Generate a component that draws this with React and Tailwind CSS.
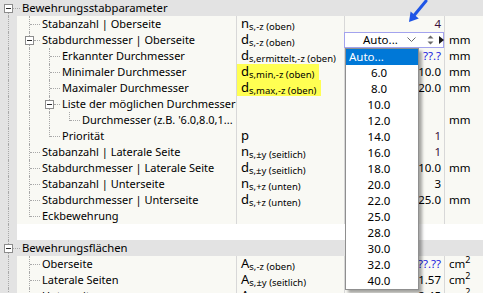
import React from "react";

const FONT = { fontFamily: '"Noto Sans", "Open Sans", sans-serif' };

const rows = [
  { type: "header", label: "Bewehrungsstabparameter", first: true },
  { g: ["T"], label: "Stabanzahl | Oberseite", sym: ["n", "s,-z (oben)"], val: "4", valCls: "text-[#3a103a]" },
  { g: ["B"], label: "Stabdurchmesser | Oberseite", sym: ["d", "s,-z (oben)"], combo: true, unit: "mm" },
  { g: ["I", "T"], label: "Erkannter Durchmesser", sym: ["d", "s,ermittelt,-z (oben)"], val: "??.?", valCls: "text-[#2020e0]", unit: "mm" },
  { g: ["I", "T"], label: "Minimaler Durchmesser", sym: ["d", "s,min,-z (oben)"], yellow: true, val: "10.0", unit: "mm" },
  { g: ["I", "T"], label: "Maximaler Durchmesser", sym: ["d", "s,max,-z (oben)"], yellow: true, val: "20.0", unit: "mm" },
  { g: ["I", "B"], label: "Liste der möglichen Durchmesser" },
  { g: ["I", "I", "L"], label: "Durchmesser (z.B. '6.0,8.0,1...", unit: "mm" },
  { g: ["I", "L"], label: "Priorität", sym: ["p", ""], val: "1", valCls: "text-[#3a103a]" },
  { g: ["T"], label: "Stabanzahl | Laterale Seite", sym: ["n", "s,±y (seitlich)"], val: "1", valCls: "text-[#3a103a]" },
  { g: ["T"], label: "Stabdurchmesser | Laterale Seite", sym: ["d", "s,±y (seitlich)"], val: "10.0", unit: "mm" },
  { g: ["T"], label: "Stabanzahl | Unterseite", sym: ["n", "s,+z (unten)"], val: "3" },
  { g: ["T"], label: "Stabdurchmesser | Unterseite", sym: ["d", "s,+z (unten)"], val: "25.0", unit: "mm" },
  { g: ["L"], label: "Eckbewehrung" },
  { type: "blank" },
  { type: "header", label: "Bewehrungsflächen" },
  { g: ["T"], label: "Oberseite", sym: ["A", "s,-z (oben)"], val: "??.??", valCls: "text-[#2020e0]", unit: "cm2" },
  { g: ["T"], label: "Laterale Seiten", sym: ["A", "s,±y (seitlich)"], val: "1.57", unit: "cm2" },
  { g: ["T"], label: "Unterseite", sym: ["A", "s,+z (unten)"], val: "2.45", unit: "cm2" },
];

const dropItems = ["Auto...", "6.0", "8.0", "10.0", "12.0", "14.0", "16.0", "18.0", "20.0", "22.0", "25.0", "28.0", "30.0", "32.0", "40.0"];

function MinusBox({ className }) {
  return (
    <div className={"absolute w-[9px] h-[9px] border border-[#8c8c8c] bg-white flex items-center justify-center " + className}>
      <div className="w-[5px] h-px bg-[#2a2a2a]" />
    </div>
  );
}

function Gutter({ header, first }) {
  return (
    <div className="w-[17px] h-4 shrink-0 bg-[#e3e3e3] relative">
      <div className={"absolute left-[8px] bottom-0 border-l border-dotted border-[#a8a8a8] " + (first ? "top-[12px]" : "top-0")} />
      {header && (
        <>
          <MinusBox className="left-[4px] top-[4px]" />
          <div className="absolute left-[13px] top-[8px] w-[7px] border-t border-dotted border-[#a8a8a8]" />
        </>
      )}
    </div>
  );
}

function Guide({ t }) {
  const line = "border-dotted border-[#a8a8a8]";
  return (
    <div className="w-[20px] h-4 shrink-0 relative">
      {(t === "I" || t === "T" || t === "B") && <div className={"absolute left-[12px] top-0 bottom-0 border-l " + line} />}
      {t === "L" && <div className={"absolute left-[12px] top-0 h-[9px] border-l " + line} />}
      {(t === "T" || t === "L") && <div className={"absolute left-[13px] top-[8px] w-[10px] border-t " + line} />}
      {t === "B" && (
        <>
          <MinusBox className="left-[8px] top-[4px]" />
          <div className={"absolute left-[17px] top-[8px] w-[6px] border-t " + line} />
        </>
      )}
    </div>
  );
}

function Sym({ sym }) {
  return (
    <span className="whitespace-nowrap">
      <span className="text-[13px]">{sym[0]}</span>
      <span className="text-[9.5px] relative top-[2px]">{sym[1]}</span>
    </span>
  );
}

function Unit({ u }) {
  if (!u) return null;
  if (u === "cm2")
    return (
      <span>
        cm<span className="text-[9px] relative -top-[5px]">2</span>
      </span>
    );
  return <span>{u}</span>;
}

function Combo() {
  return (
    <div className="absolute top-0 bottom-0 -left-px right-0 border border-[#a3a3ee] bg-white flex items-center text-left">
      <span className="ml-[18px] w-[44px] shrink-0 whitespace-nowrap">Auto...</span>
      <svg width="9" height="6" viewBox="0 0 9 6" className="shrink-0">
        <path d="M0.5 0.5 L4.5 4.5 L8.5 0.5" fill="none" stroke="#6a6a6a" strokeWidth="1" />
      </svg>
      <svg width="7" height="10" viewBox="0 0 7 10" className="ml-[11px] shrink-0">
        <path d="M3.5 0.5 L6.5 3.5 L0.5 3.5 Z" fill="#6a6a6a" />
        <path d="M3.5 9.5 L6.5 6.5 L0.5 6.5 Z" fill="#6a6a6a" />
      </svg>
      <svg width="5" height="8" viewBox="0 0 5 8" className="ml-[5px] shrink-0">
        <path d="M0 0 L5 4 L0 8 Z" fill="#1a1a1a" />
      </svg>
      <div className="absolute left-0 top-[15px] w-[74px] border border-[#8f8f8f] bg-white shadow-[3px_3px_3px_rgba(0,0,0,0.35)] z-10">
        {dropItems.map((it, i) =>
          i === 0 ? (
            <div key={it} className="h-4 leading-4 bg-[#0078d7] text-white pl-[3px] text-left">
              {it}
            </div>
          ) : (
            <div key={it} className="h-4 leading-4 text-center pr-[6px] text-black">
              {it}
            </div>
          )
        )}
      </div>
    </div>
  );
}

function Row({ r }) {
  if (r.type === "blank")
    return (
      <div className="flex h-4">
        <Gutter />
        <div className="flex-1 bg-white" />
      </div>
    );
  if (r.type === "header")
    return (
      <div className="flex h-4 bg-[#e3e3e3]">
        <Gutter header first={r.first} />
        <div className="pl-[5px] leading-4 whitespace-nowrap text-[11.3px]">{r.label}</div>
      </div>
    );
  return (
    <div className="flex h-4 bg-[#f9f9f4]">
      <Gutter />
      <div className="w-[219px] shrink-0 flex overflow-hidden">
        {r.g.map((t, i) => (
          <Guide key={i} t={t} />
        ))}
        <div className="pl-[5px] leading-4 whitespace-nowrap text-[11px]">{r.label}</div>
      </div>
      <div className="w-[108px] shrink-0 border-l border-[#d8d8d8] flex leading-4 overflow-hidden">
        {r.sym && (
          <div className={"h-4 flex items-center pl-[4px] pr-[5px] " + (r.yellow ? "bg-[#ffff52]" : "")}>
            <Sym sym={r.sym} />
          </div>
        )}
      </div>
      <div className="w-[100px] shrink-0 border-l border-[#d8d8d8] relative text-right pr-[3px] leading-4">
        {r.combo ? <Combo /> : <span className={r.valCls || "text-black"}>{r.val}</span>}
      </div>
      <div className="flex-1 border-l border-[#d8d8d8] pl-[4px] leading-4 whitespace-nowrap">
        <Unit u={r.unit} />
      </div>
    </div>
  );
}

export default function App() {
  return (
    <div className="w-[483px] h-[293px] overflow-hidden relative text-[11.5px] text-black bg-white" style={FONT}>
      {rows.map((r, i) => (
        <Row key={i} r={r} />
      ))}
      <svg className="absolute left-[400px] top-0" width="30" height="26" viewBox="0 0 30 26">
        <line x1="26" y1="1" x2="14" y2="15.5" stroke="#1f55e6" strokeWidth="3" strokeLinecap="round" />
        <polygon points="9,22 18.8,18.4 10.6,11.6" fill="#1f55e6" />
      </svg>
    </div>
  );
}
